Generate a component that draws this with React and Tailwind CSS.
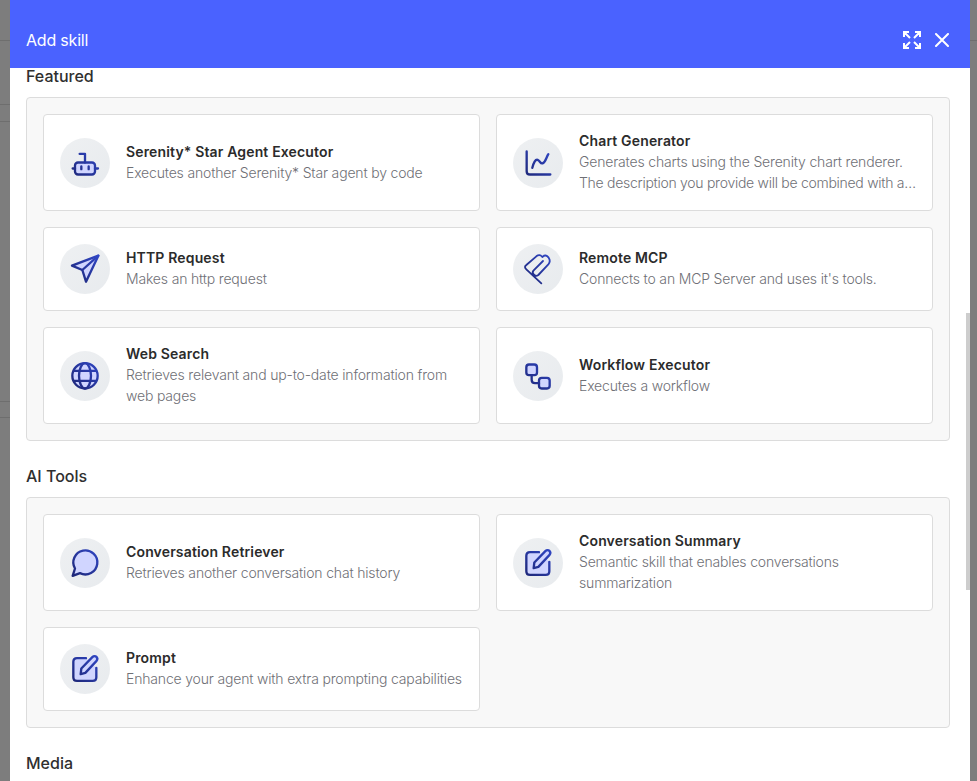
import React, { useId } from "react";

const Glyph = ({ y, width = 7, children }) => {
    const id = useId();
    return (
        <svg
            viewBox={`30 ${y} 150 150`}
            className="w-[50px] h-[50px]"
            fill="none"
            stroke={`url(#${id})`}
            strokeWidth={width}
            strokeLinecap="round"
            strokeLinejoin="round"
        >
            <defs>
                <linearGradient id={id} gradientUnits="userSpaceOnUse" x1="60" y1="150" x2="150" y2="60">
                    <stop offset="0" stopColor="#1c2470" />
                    <stop offset="1" stopColor="#3148c8" />
                </linearGradient>
            </defs>
            {children}
        </svg>
    );
};

const fill = "#d0d5ff";

const RobotIcon = () => (
    <Glyph y={22.5}>
        <rect x="75" y="96" width="60" height="36" rx="9" fill={fill} />
        <path d="M105 96V70H89M68 114H75M135 114H144" />
        <path d="M94 108V116M116 108V116" />
    </Glyph>
);

const ChartIcon = () => (
    <Glyph y={22.5}>
        <path d="M71 63V122Q71 132 81 132H142" />
        <path d="M88 112C92 96 97 86 104 88C112 91 112 102 120 98C128 94 130 80 136 71" />
    </Glyph>
);

const SendIcon = () => (
    <Glyph y={27}>
        <path d="M145 62L66 92L97 105L108 140Z" fill={fill} />
        <path d="M97 105L145 62" />
    </Glyph>
);

const ClipIcon = () => (
    <Glyph y={27} width={5.5}>
        <path d="M115 145L70 103Q62 96 70 90L100 64Q110 56 118 66Q128 56 137 68Q144 78 136 88L106 120Q98 126 92 118Q86 112 92 106L120 78" />
    </Glyph>
);

const GlobeIcon = () => (
    <Glyph y={31.5}>
        <circle cx="105" cy="106" r="38" fill={fill} />
        <ellipse cx="105" cy="106" rx="18" ry="38" />
        <path d="M72 91H138M72 121H138" />
    </Glyph>
);

const FlowIcon = () => (
    <Glyph y={31.5}>
        <rect x="70" y="72" width="32" height="32" rx="8" fill={fill} />
        <rect x="108" y="112" width="32" height="32" rx="8" fill={fill} />
        <path d="M86 104V118Q86 128 96 128H108" />
    </Glyph>
);

const ChatIcon = () => (
    <Glyph y={28.5}>
        <path d="M75 120A36 36 0 1 1 90 134L68 142Z" fill={fill} />
    </Glyph>
);

const EditIcon = () => (
    <Glyph y={28.5}>
        <path d="M108 71H81Q70 71 70 82V128Q70 139 81 139H128Q139 139 139 128V100" fill={fill} />
        <path d="M92 119L94 102L127 68C136 59 147 71 139 80L106 115Z" fill={fill} />
    </Glyph>
);

const SkillCard = ({ icon, title, description }) => (
    <div className="bg-white border border-[#dcdcdc] rounded p-4 flex items-center gap-4">
        <div className="w-[50px] h-[50px] shrink-0 rounded-full bg-gradient-to-br from-[#eef0f2] to-[#e8ebee]">
            {icon}
        </div>
        <div className="min-w-0 flex-1 -translate-y-px">
            <div className="text-[14px] leading-[21px] font-semibold tracking-[0.15px] text-[#2b2b2b]">{title}</div>
            <div className="text-[14px] leading-[21px] font-light tracking-[-0.17px] text-[#6f7076]">{description}</div>
        </div>
    </div>
);

const Section = ({ title, first, skills }) => (
    <div className={first ? "" : "mt-[27px]"}>
        <h3 className="text-[16px] leading-[16px] font-medium text-[#2f2f2f] mb-[13px]">{title}</h3>
        {skills && (
            <div className="bg-[#f8f8f8] border border-[#dcdcdc] rounded p-4 grid grid-cols-2 gap-4">
                {skills.map((skill) => (
                    <SkillCard key={skill.title} {...skill} />
                ))}
            </div>
        )}
    </div>
);

const featured = [
    { icon: <RobotIcon />, title: "Serenity* Star Agent Executor", description: "Executes another Serenity* Star agent by code" },
    {
        icon: <ChartIcon />,
        title: "Chart Generator",
        description: (
            <>
                <span className="block">Generates charts using the Serenity chart renderer.</span>
                <span className="block whitespace-nowrap tracking-[-0.28px]">The description you provide will be combined with a…</span>
            </>
        ),
    },
    { icon: <SendIcon />, title: "HTTP Request", description: "Makes an http request" },
    { icon: <ClipIcon />, title: "Remote MCP", description: "Connects to an MCP Server and uses it's tools." },
    { icon: <GlobeIcon />, title: "Web Search", description: "Retrieves relevant and up-to-date information from web pages" },
    { icon: <FlowIcon />, title: "Workflow Executor", description: "Executes a workflow" },
];

const aiTools = [
    { icon: <ChatIcon />, title: "Conversation Retriever", description: "Retrieves another conversation chat history" },
    { icon: <EditIcon />, title: "Conversation Summary", description: "Semantic skill that enables conversations summarization" },
    { icon: <EditIcon />, title: "Prompt", description: "Enhance your agent with extra prompting capabilities" },
];

export default function App() {
    return (
        <div className="h-[781px] overflow-hidden flex bg-[#7d7d7d] font-['Inter',sans-serif]">
            <div className="w-[10px] shrink-0">
                <div className="mt-[40px] border-t border-[#6e6e6e]" />
                <div className="mt-[63px] border-t border-[#6e6e6e]" />
                <div className="mt-[16px] border-t border-[#6e6e6e]" />
                <div className="mt-[279px] border-t border-[#6e6e6e]" />
                <div className="mt-[15px] border-t border-[#6e6e6e]" />
            </div>

            <div className="relative w-[960px] shrink-0 bg-white flex flex-col">
                <div className="h-[68px] shrink-0 bg-[#4a62ff] flex items-center justify-between pt-3 pl-4 pr-[21px] text-white">
                    <span className="text-[16px] tracking-[-0.2px]">Add skill</span>
                    <div className="flex items-center gap-[14px]">
                        <svg width="18" height="18" viewBox="0 0 18 18" fill="none" stroke="currentColor" strokeWidth="2">
                            <path d="M1 6V1H6M1 1L7 7M12 1H17V6M17 1L11 7M1 12V17H6M1 17L7 11M12 17H17V12M17 17L11 11" />
                        </svg>
                        <svg width="14" height="14" viewBox="0 0 14 14" fill="none" stroke="currentColor" strokeWidth="2" strokeLinecap="round">
                            <path d="M1 1L13 13M13 1L1 13" />
                        </svg>
                    </div>
                </div>

                <div className="flex-1 min-h-0 px-4 pr-5">
                    <Section first title="Featured" skills={featured} />
                    <Section title="AI Tools" skills={aiTools} />
                    <Section title="Media" />
                </div>

                <div className="absolute right-0 top-[313px] w-1 h-[277px] bg-[#cdcdcd]" />
            </div>

            <div className="flex-1">
                <div className="mt-[40px] border-t border-[#6e6e6e]" />
            </div>
        </div>
    );
}
